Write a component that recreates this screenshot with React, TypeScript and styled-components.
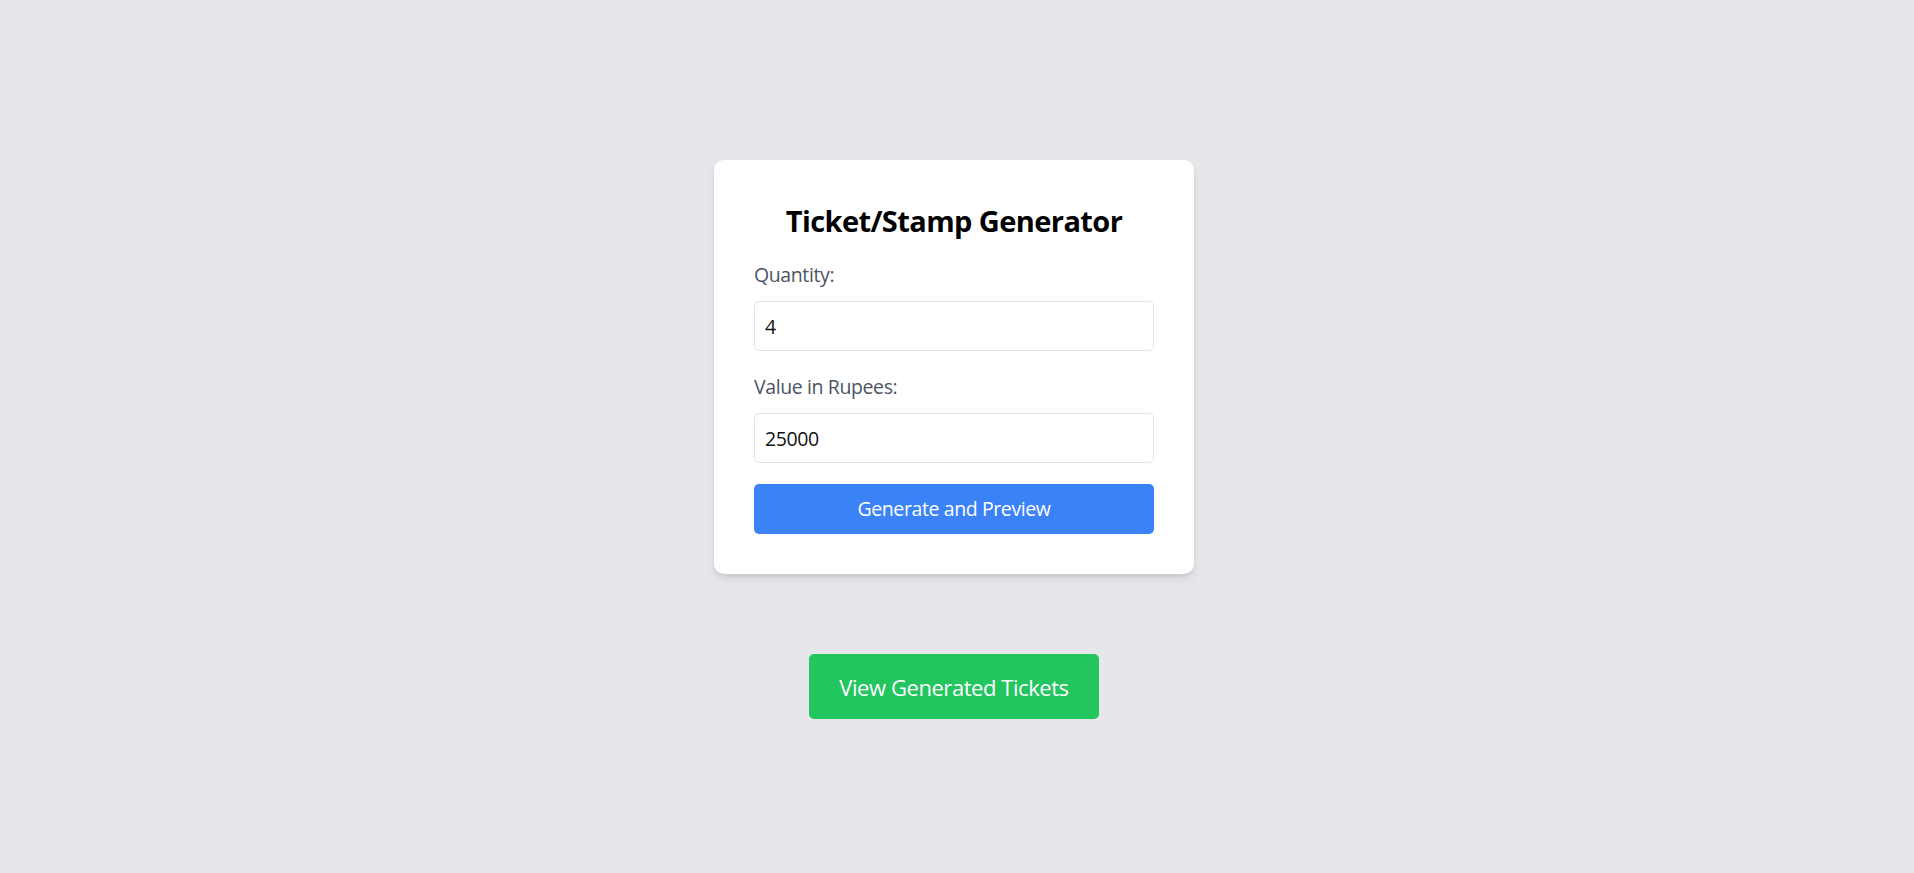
import React, { useState } from "react";
import styled, { createGlobalStyle } from "styled-components";

const Global = createGlobalStyle`
  html, body { margin: 0; padding: 0; background: #e5e7eb; }
  body { font-family: "Open Sans", "Noto Sans", sans-serif; }
  * { box-sizing: border-box; }
`;

const Page = styled.div`
  min-height: 873px;
  display: flex;
  flex-direction: column;
  align-items: center;
  padding: 160px 6px 0 0;
  background: #e5e7eb;
`;

const Card = styled.div`
  width: 480px;
  background: #ffffff;
  border-radius: 10px;
  padding: 40px;
  box-shadow: 0 5px 8px -1px rgba(0, 0, 0, 0.1), 0 2px 5px -2px rgba(0, 0, 0, 0.1);
`;

const Title = styled.h2`
  margin: 0 0 20px;
  padding-top: 1px;
  height: 40px;
  font-size: 29px;
  line-height: 40px;
  font-weight: 700;
  letter-spacing: -0.02em;
  color: #000;
  text-align: center;
`;

const Field = styled.div`
  margin-bottom: 21px;
`;

const Label = styled.label`
  display: block;
  font-size: 19.5px;
  line-height: 30px;
  letter-spacing: -0.02em;
  color: #4b5563;
  margin-bottom: 11px;
`;

const Input = styled.input`
  display: block;
  width: 100%;
  height: 50px;
  padding: 0 10px;
  border: 1px solid #e2e4e8;
  border-radius: 5px;
  font-family: inherit;
  font-size: 19.5px;
  letter-spacing: -0.02em;
  color: #111;
  background: #fff;
  outline: none;
`;

const Button = styled.button<{ $tone: "blue" | "green" }>`
  display: block;
  border: none;
  border-radius: 5px;
  color: #fff;
  font-family: inherit;
  letter-spacing: -0.02em;
  cursor: pointer;
  background: ${(p) => (p.$tone === "blue" ? "#3b82f6" : "#22c55e")};
`;

const PrimaryButton = styled(Button)`
  width: 100%;
  height: 50px;
  font-size: 19.5px;
  line-height: 30px;
`;

const ViewButton = styled(Button)`
  margin-top: 80px;
  height: 65px;
  padding: 2px 30px 0;
  font-size: 22px;
  line-height: 35px;
`;

export default function App() {
  const [qty, setQty] = useState("4");
  const [val, setVal] = useState("25000");
  return (
    <>
      <Global />
      <Page>
        <Card>
          <Title>Ticket/Stamp Generator</Title>
          <Field>
            <Label htmlFor="qty">Quantity:</Label>
            <Input id="qty" type="text" value={qty} onChange={(e) => setQty(e.target.value)} />
          </Field>
          <Field>
            <Label htmlFor="val">Value in Rupees:</Label>
            <Input id="val" type="text" value={val} onChange={(e) => setVal(e.target.value)} />
          </Field>
          <PrimaryButton $tone="blue">Generate and Preview</PrimaryButton>
        </Card>
        <ViewButton $tone="green">View Generated Tickets</ViewButton>
      </Page>
    </>
  );
}
